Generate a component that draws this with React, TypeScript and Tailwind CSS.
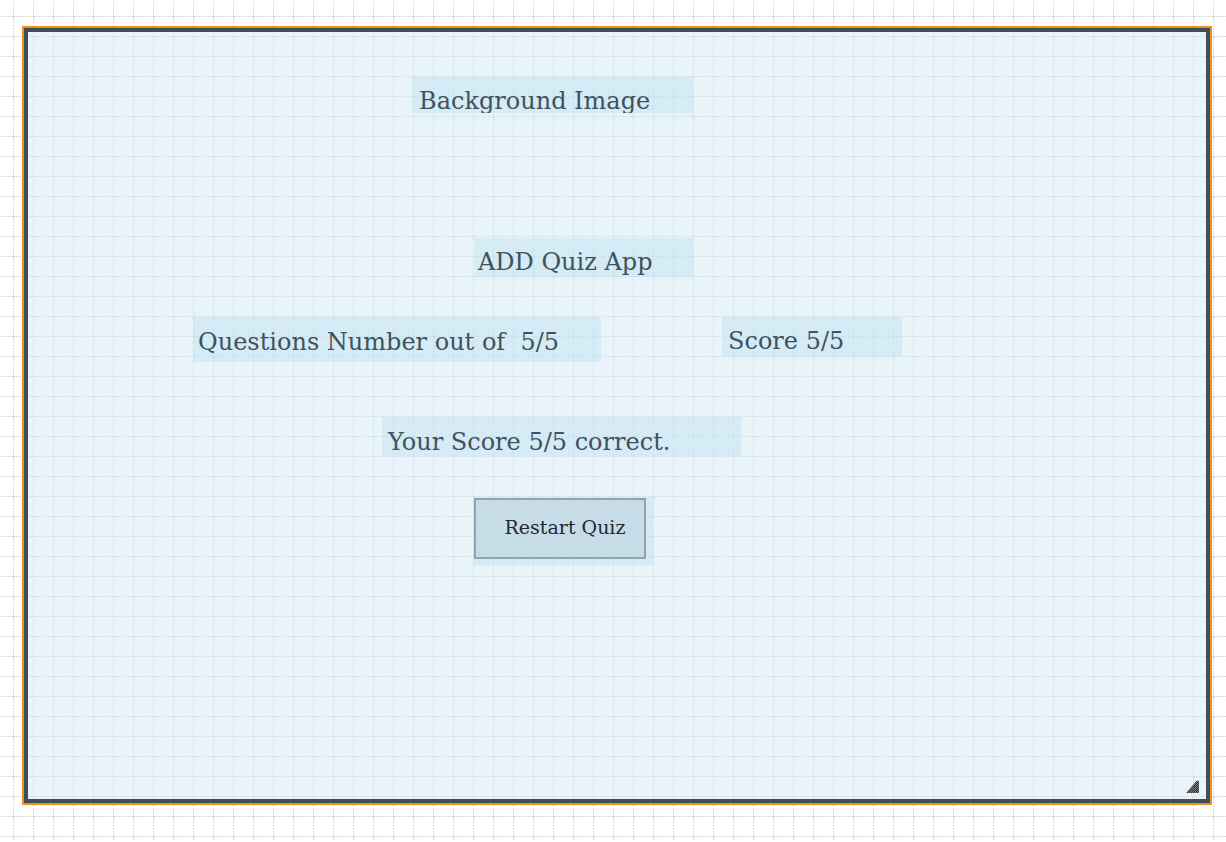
import React from "react";

const GridPaper = () => (
  <svg className="absolute inset-0 h-full w-full" width="1226" height="842">
    <defs>
      <pattern id="grid" x="13" y="16" width="20" height="20" patternUnits="userSpaceOnUse">
        <line x1="0.5" y1="0" x2="0.5" y2="20" stroke="#cfcfcf" strokeWidth="1" strokeDasharray="1.5 1.5" />
        <line x1="0" y1="0.5" x2="20" y2="0.5" stroke="#cfcfcf" strokeWidth="1" strokeDasharray="1.5 1.5" />
        <circle cx="0.5" cy="0.5" r="1.7" fill="#d0d0d0" />
      </pattern>
    </defs>
    <rect width="100%" height="100%" fill="url(#grid)" />
  </svg>
);

const ResizeHandle = () => (
  <svg className="absolute right-[6px] bottom-[6px]" width="14" height="14" viewBox="0 0 14 14">
    <defs>
      <pattern id="hatch" width="2" height="2" patternUnits="userSpaceOnUse">
        <rect width="2" height="2" fill="#7a7a7a" />
        <rect width="1" height="1" fill="#333" />
        <rect x="1" y="1" width="1" height="1" fill="#333" />
      </pattern>
    </defs>
    <path d="M0 14 L10 2.5 Q13 0 13 3.5 L13 14 Z" fill="url(#hatch)" />
  </svg>
);

const Label = ({ children, className }: { children: React.ReactNode; className: string }) => (
  <div className={`overflow-hidden whitespace-pre bg-[#bfe0f0]/45 text-[24px] leading-[28px] text-[#3e535e] ${className}`}>
    {children}
  </div>
);

export default function App() {
  return (
    <div className="relative h-[842px] w-[1226px] overflow-hidden bg-white font-['DejaVu_Serif',serif]">
      <GridPaper />
      <div className="relative pl-[22px] pt-[26px]">
        <div className="h-[779px] w-[1190px] border-2 border-[#f0901e]">
          <div className="relative flex h-full w-full flex-col border-4 border-[#3e4f57] bg-[#d1e9f5]/50">
            <Label className="ml-[384px] mt-[45px] h-[36px] w-[281px] pl-[7px] pt-[10px]">Background Image</Label>

            <Label className="ml-[447px] mt-[125px] h-[39px] w-[218px] pl-[3px] pt-[10px]">ADD Quiz App</Label>

            <div className="mt-[40px] flex items-start">
              <Label className="ml-[165px] h-[45px] w-[408px] pl-[5px] pt-[11px]">Questions Number out of  5/5</Label>
              <Label className="ml-[121px] h-[40px] w-[180px] pl-[6px] pt-[10px]">Score 5/5</Label>
            </div>

            <Label className="ml-[354px] mt-[55px] h-[39px] w-[359px] pl-[6px] pt-[11px]">Your Score 5/5 correct.</Label>

            <div className="ml-[445px] mt-[41px] h-[68px] w-[180px] bg-[#bfe0f0]/45 pl-px pt-px">
              <button className="flex h-[61px] w-[172px] items-center justify-center border-2 border-[#8ea4ae] bg-[#c6dce6] pb-[2px] pl-[10px] text-[19px] text-[#1c2b33]">
                Restart Quiz
              </button>
            </div>

            <ResizeHandle />
          </div>
        </div>
      </div>
    </div>
  );
}
